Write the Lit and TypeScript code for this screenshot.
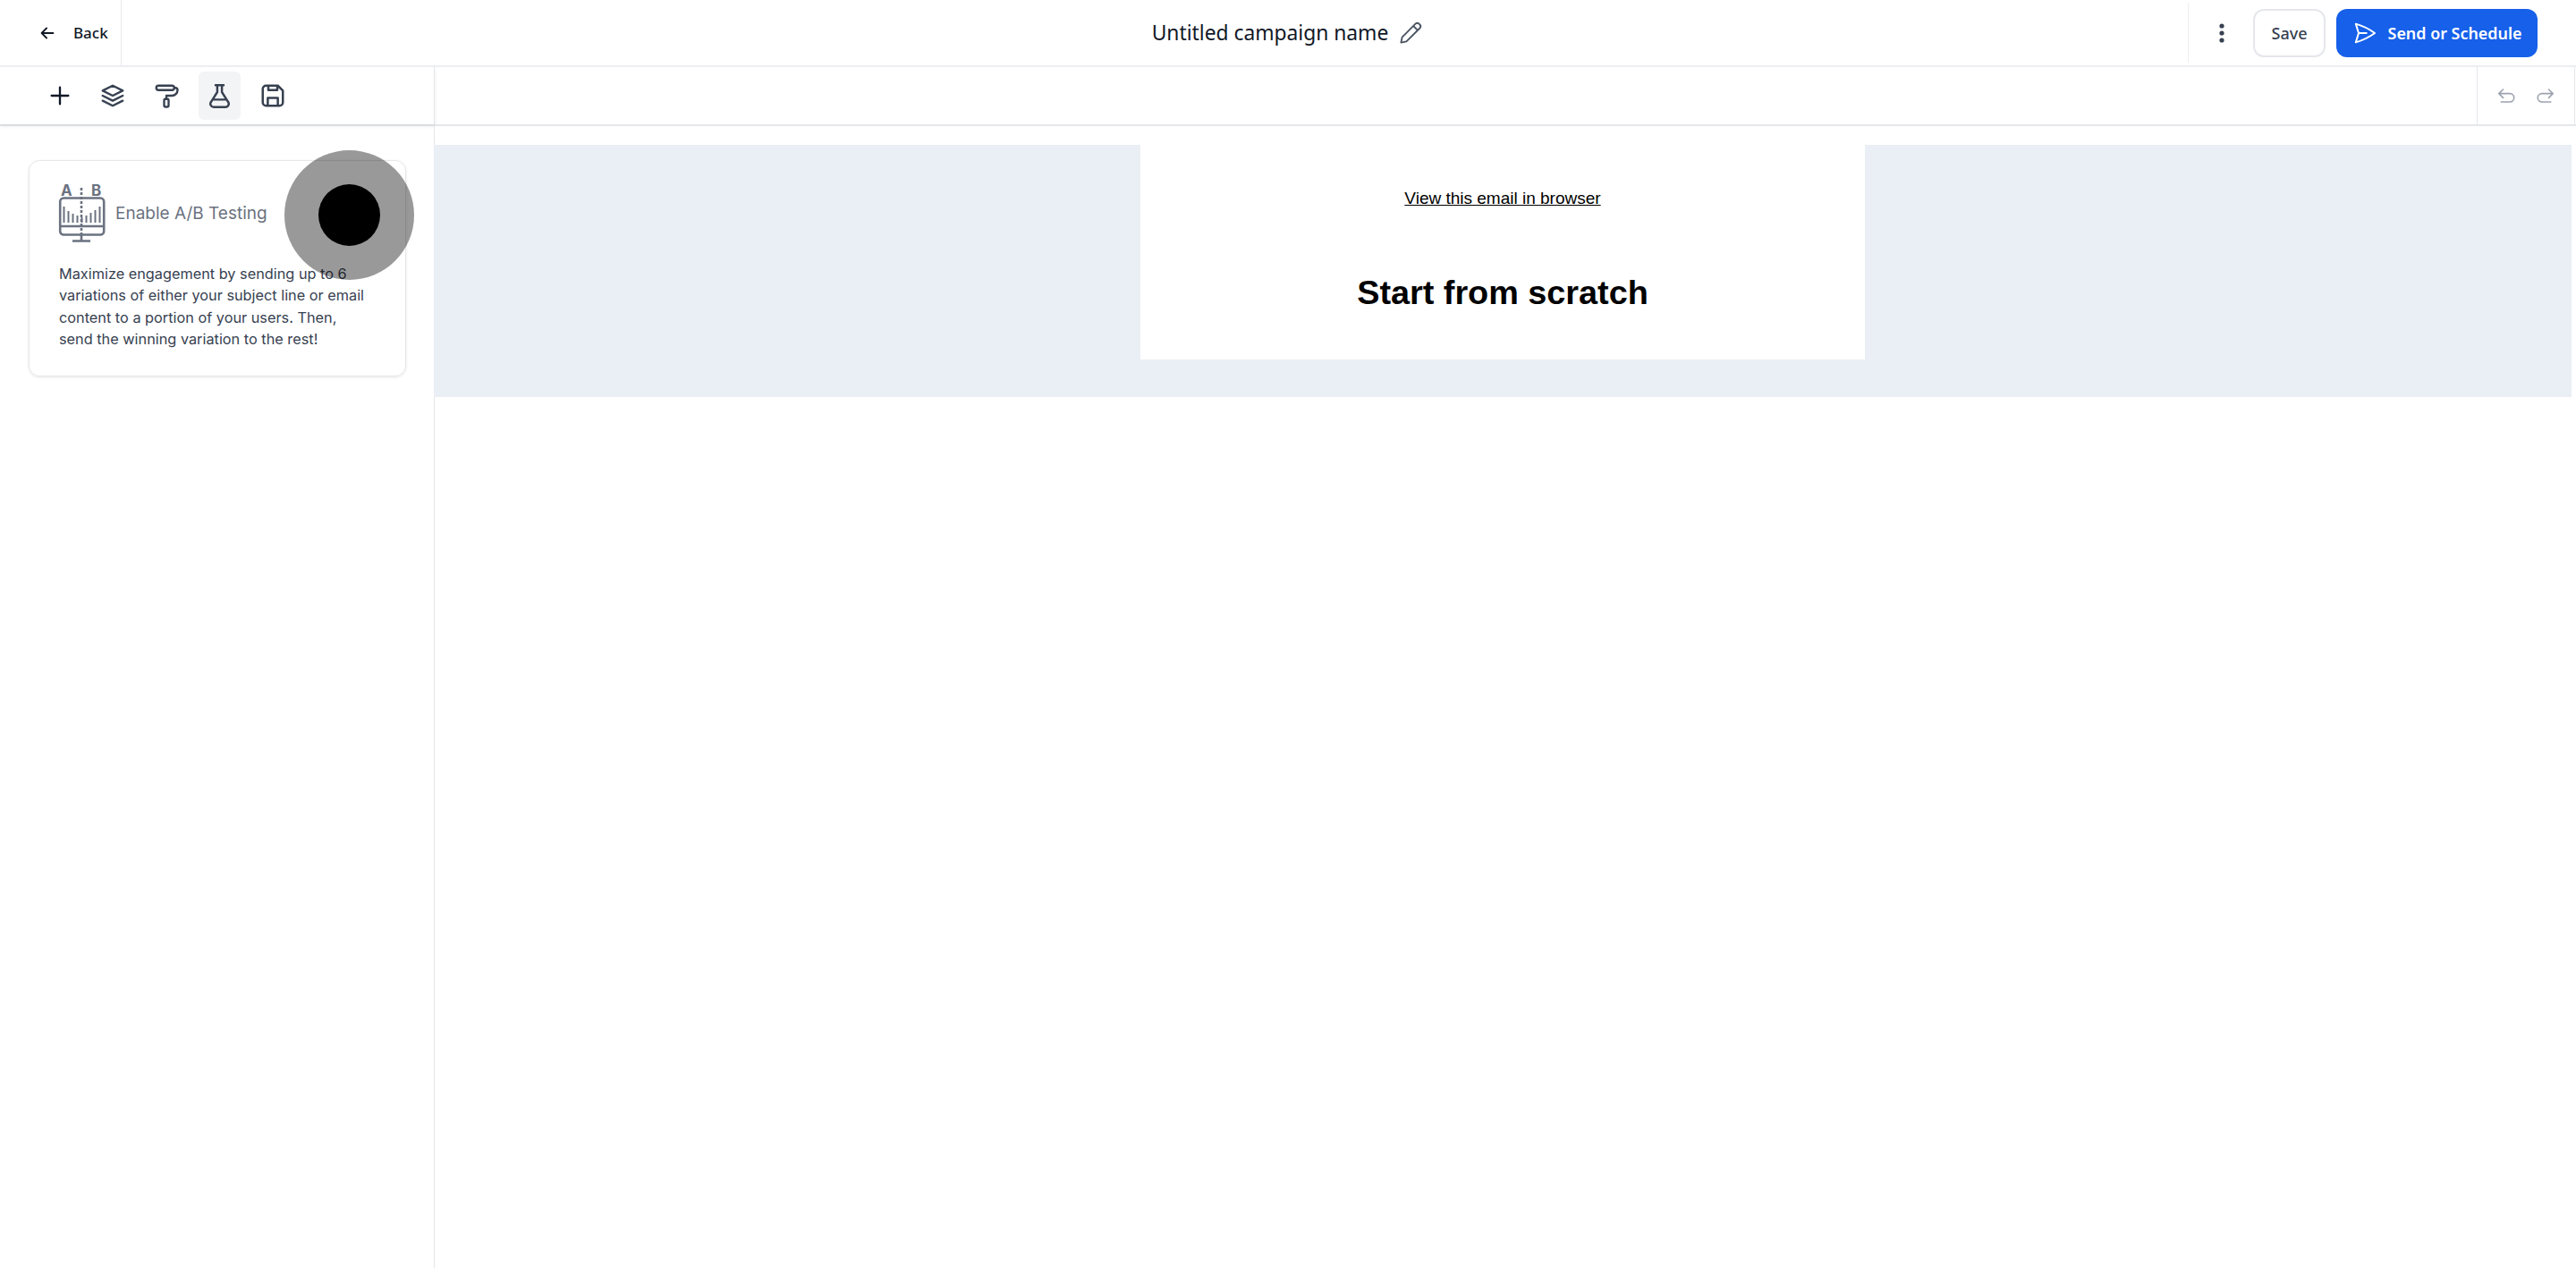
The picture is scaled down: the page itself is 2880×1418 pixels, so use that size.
import { LitElement, html, css, svg } from "lit";
import { customElement } from "lit/decorators.js";

const icon = (paths: unknown, size = 24, sw = 2) => html`<svg width=${size} height=${size} viewBox="0 0 24 24" fill="none" stroke="currentColor" stroke-width=${sw} stroke-linecap="round" stroke-linejoin="round">${paths}</svg>`;

const bars = [18, 13, 10, 8, 6, 8, 11, 14, 18];

@customElement("app-root")
export class AppRoot extends LitElement {
  static styles = css`
    :host { display: block; height: 100vh; min-height: 1418px; background: #fff; font-family: "Noto Sans", sans-serif; color: #111827; position: relative; overflow: hidden; }
    * { box-sizing: border-box; }
    .top { height: 75px; display: flex; align-items: center; border-bottom: 2px solid #eceef1; position: relative; }
    .back { width: 136px; height: 73px; display: flex; align-items: center; gap: 18px; padding-left: 42px; border-right: 1px solid #e5e7eb; font-size: 17px; font-weight: 500; color: #111827; }
    .back svg { flex: none; }
    .title { flex: 1; display: flex; align-items: center; justify-content: center; gap: 10px; font-size: 22.8px; color: #111827; margin-left: 298px; }
    .title svg { color: #4b5563; }
    .actions { display: flex; align-items: center; height: 67px; border-left: 1px solid #eceef1; padding-left: 27px; margin-right: 43px; }
    .dots { width: 20px; display: flex; justify-content: center; color: #374151; margin-right: 25px; }
    .btn { height: 54px; border-radius: 12px; display: flex; align-items: center; justify-content: center; font-size: 18px; font-weight: 500; }
    .save { width: 81px; border: 2px solid #e5e7eb; color: #374151; margin-right: 12px; background: #fff; }
    .send { width: 225px; background: #1660ea; color: #fff; gap: 12px; font-weight: 600; font-size: 17.9px; }
    .row { height: 66px; display: flex; border-bottom: 2px solid #e5e7eb; }
    .tools { width: 486px; flex: none; display: flex; align-items: center; gap: 12.7px; padding-left: 43px; border-right: 1px solid #e5e7eb; box-shadow: 0 2px 4px rgba(17, 24, 39, .08); color: #374151; }
    .tool { width: 47px; height: 54px; border-radius: 6px; display: flex; align-items: center; justify-content: center; }
    .tool.on { background: #f3f4f6; }
    .tool.plus { color: #111827; }
    .spacer { flex: 1; }
    .history { width: 110px; margin-right: 1px; display: flex; align-items: center; gap: 16px; padding-left: 18px; border-left: 1px solid #e5e7eb; border-right: 1px solid #e5e7eb; color: #9ca3af; }
    .body { display: flex; height: calc(100% - 141px); }
    .side { width: 486px; flex: none; border-right: 1px solid #e5e7eb; padding: 38px 0 0 32px; }
    .card { width: 422px; height: 242px; border: 1px solid #e5e7eb; border-radius: 12px; box-shadow: 0 1px 3px rgba(17, 24, 39, .1); padding: 27px 0 0 33px; font-family: Inter, sans-serif; }
    .head { display: flex; align-items: center; gap: 11px; height: 66px; }
    .head span { font-size: 19px; color: #6b7280; padding-bottom: 4px; }
    .head svg { overflow: visible; }
    .desc { margin: 21px 0 0; font-size: 16.3px; line-height: 24.4px; color: #374151; width: 350px; }
    .canvas { flex: 1; margin: 21px 5px 0 -1px; height: 282px; background: #eaeff6; display: flex; justify-content: center; align-items: flex-start; }
    .sheet { width: 810px; height: 240px; background: #fff; font-family: "Liberation Sans", Arial, sans-serif; color: #000; text-align: center; }
    .view { padding-top: 48px; font-size: 19px; line-height: 24px; text-decoration: underline; }
    .start { margin: 69px 0 0; font-size: 37.8px; line-height: 48px; font-weight: 700; }
    .cursor { position: absolute; left: 318px; top: 168px; width: 145px; height: 145px; border-radius: 50%; background: rgba(0, 0, 0, .4); display: flex; align-items: center; justify-content: center; }
    .cursor i { width: 69px; height: 69px; border-radius: 50%; background: #000; display: block; }
    .abtext { font: 700 17px Inter, sans-serif; fill: #6b7280; stroke: none; }
  `;

  render() {
    return html`
      <div class="top">
        <div class="back">${icon(svg`<path d="M19 12H5M11 6l-6 6 6 6"/>`, 22, 2)}<span>Back</span></div>
        <div class="title"><span>Untitled campaign name</span>${icon(svg`<path d="M3.5 20.5l1-4.8L16.4 3.7a2.3 2.3 0 0 1 3.2 0l.7.7a2.3 2.3 0 0 1 0 3.2L8.3 19.5l-4.8 1zM14.5 5.6l3.9 3.9"/>`, 30, 1.5)}</div>
        <div class="actions">
          <div class="dots"><svg width="6" height="22" viewBox="0 0 6 22" fill="currentColor"><circle cx="3" cy="3" r="2.6"/><circle cx="3" cy="11" r="2.6"/><circle cx="3" cy="19" r="2.6"/></svg></div>
          <div class="btn save">Save</div>
          <div class="btn send">${icon(svg`<path d="M6 12 3.27 3.13A59.77 59.77 0 0 1 21.49 12 59.77 59.77 0 0 1 3.27 20.88L6 12Zm0 0h7.5"/>`, 28, 1.7)}<span>Send or Schedule</span></div>
        </div>
      </div>
      <div class="row">
        <div class="tools">
          <div class="tool plus">${icon(svg`<path d="M12 4v16M4 12h16"/>`, 28, 2)}</div>
          <div class="tool">${icon(svg`<path d="M12 3 3 7.5l9 4.5 9-4.5L12 3zM3 12l9 4.5 9-4.5M3 16.5l9 4.5 9-4.5"/>`, 30, 1.9)}</div>
          <div class="tool">${icon(svg`<path d="M5 3h12a2 2 0 0 1 0 4H5a2 2 0 0 1 0-4zM19 5h1a2 2 0 0 1 2 2 5 5 0 0 1-5 5h-5v3M11 15h2a1 1 0 0 1 1 1v5a1 1 0 0 1-1 1h-2a1 1 0 0 1-1-1v-5a1 1 0 0 1 1-1z"/>`, 30, 1.9)}</div>
          <div class="tool on">${icon(svg`<path d="M8.5 2.5h7M10 2.5v6l-5.2 8.2A2.9 2.9 0 0 0 7.2 21.5h9.6a2.9 2.9 0 0 0 2.4-4.8L14 8.5v-6M6 15h12"/>`, 31, 1.9)}</div>
          <div class="tool">${icon(svg`<path d="M6 3h10.5L21 7.5V18a3 3 0 0 1-3 3H6a3 3 0 0 1-3-3V6a3 3 0 0 1 3-3zM7.5 21v-7h9v7M8 3v4h8V3"/>`, 30, 2)}</div>
        </div>
        <div class="spacer"></div>
        <div class="history">
          ${icon(svg`<path d="M9 14l-4-4 4-4M5 10h10.5a4 4 0 0 1 0 8H7"/>`, 28, 1.4)}
          ${icon(svg`<path d="M15 14l4-4-4-4M19 10H8.5a4 4 0 0 0 0 8H17"/>`, 28, 1.4)}
        </div>
      </div>
      <div class="body">
        <div class="side">
          <div class="card">
            <div class="head">
              <svg width="52" height="66" viewBox="0 0 52 66" fill="none" stroke="#6b7280" stroke-width="2.6">
                <text class="abtext" x="2" y="12">A</text>
                <text class="abtext" x="36" y="12">B</text>
                <rect x="1.2" y="14.5" width="49" height="41" rx="4"/>
                <path d="M1.2 46h49M15 62.5h20M25 55v7"/>
                <path d="M25 3v55" stroke-dasharray="3 2"/>
                ${bars.map((h, i) => svg`<path d="M${5.5 + i * 5} 42v-${h}" stroke-width="2"/>`)}
              </svg>
              <span>Enable A/B Testing</span>
            </div>
            <p class="desc">Maximize engagement by sending up to 6 variations of either your subject line or email content to a portion of your users. Then, send the winning variation to the rest!</p>
          </div>
        </div>
        <div class="canvas">
          <div class="sheet">
            <div class="view">View this email in browser</div>
            <h1 class="start">Start from scratch</h1>
          </div>
        </div>
      </div>
      <div class="cursor"><i></i></div>
    `;
  }
}
